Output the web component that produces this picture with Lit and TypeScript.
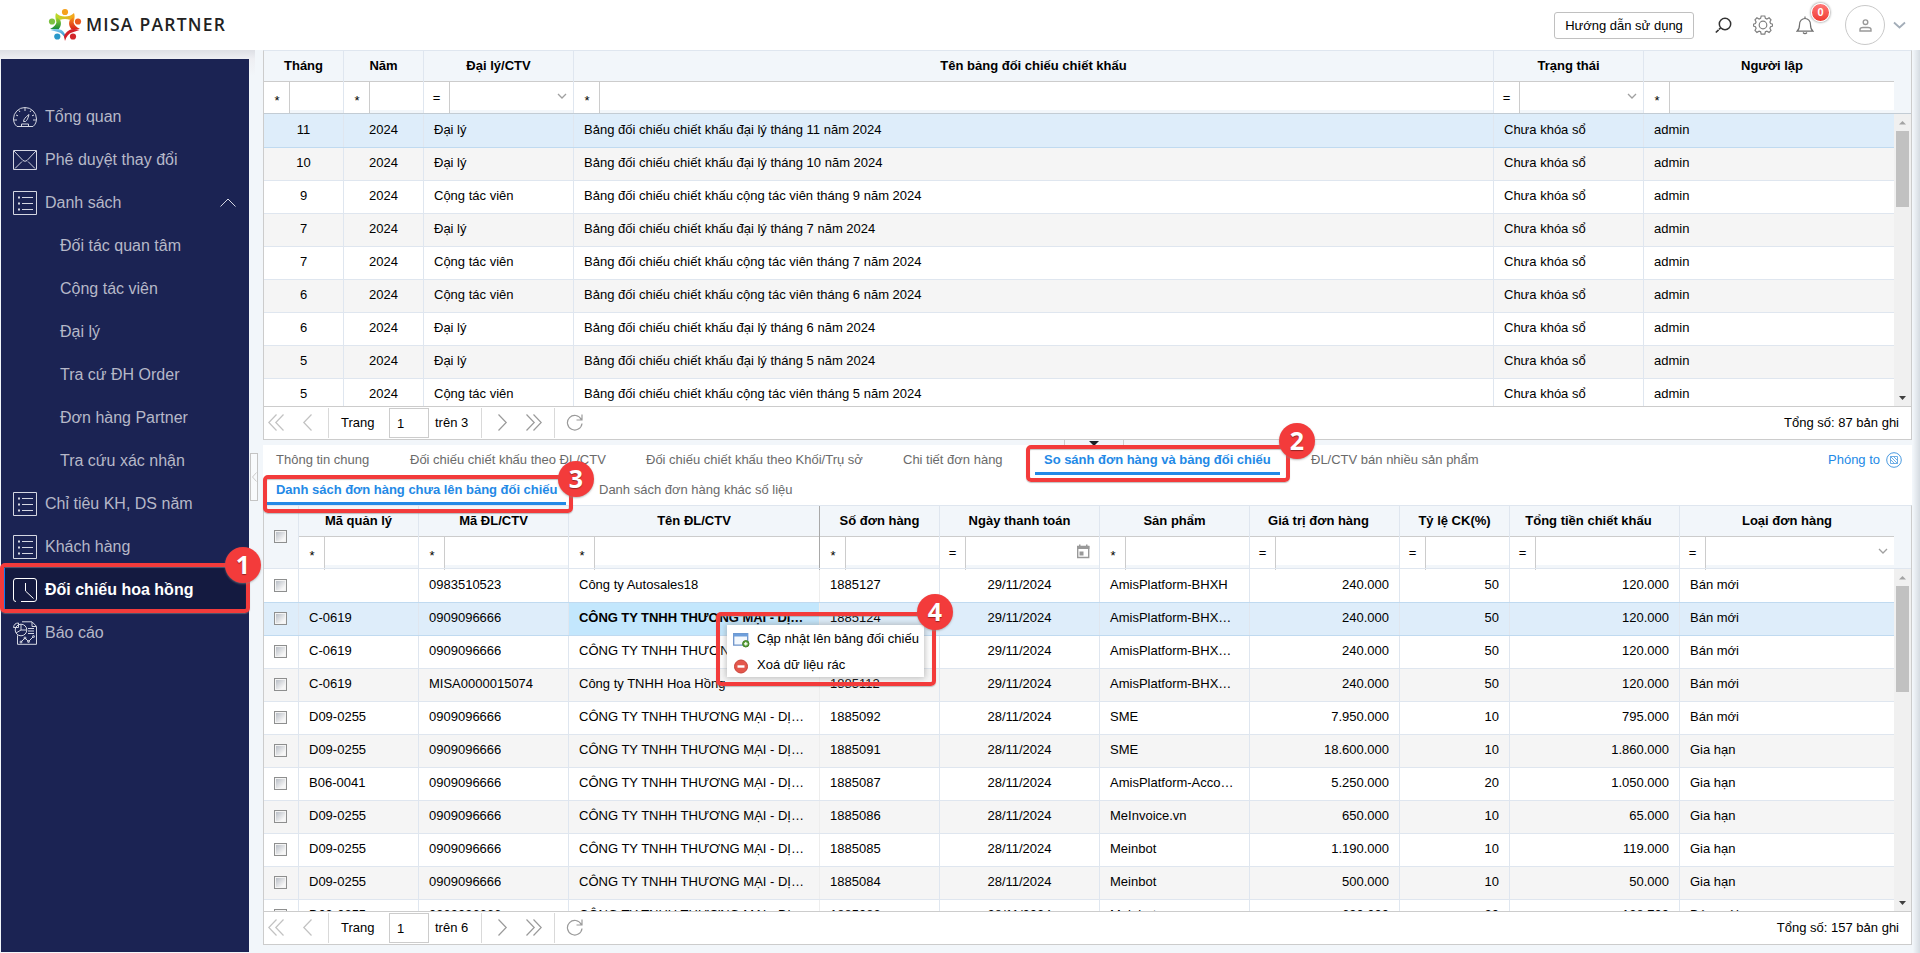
import { LitElement, html, svg, css, nothing } from "lit";
import { customElement } from "lit/decorators.js";
import { classMap } from "lit/directives/class-map.js";

type Col = { t: string; op: string; al?: string; icon?: string; shift?: string };

const GRID1: Col[] = [
  { t: "Tháng", op: "*", al: "c" },
  { t: "Năm", op: "*", al: "c" },
  { t: "Đại lý/CTV", op: "=", icon: "down" },
  { t: "Tên bảng đối chiếu chiết khấu", op: "*" },
  { t: "Trạng thái", op: "=", icon: "down" },
  { t: "Người lập", op: "*", shift: "fwd" },
];
const AG = "Đại lý", CTV = "Cộng tác viên";
const ROWS1 = ([[11, AG], [10, AG], [9, CTV], [7, AG], [7, CTV], [6, CTV], [6, AG], [5, AG], [5, CTV]] as [number, string][]).map(
  ([m, k]) => [String(m), "2024", k, `Bảng đối chiếu chiết khấu ${k === AG ? "đại lý" : "cộng tác viên"} tháng ${m} năm 2024`, "Chưa khóa sổ", "admin"]
);

const GRID2: Col[] = [
  { t: "Mã quản lý", op: "*" },
  { t: "Mã ĐL/CTV", op: "*" },
  { t: "Tên ĐL/CTV", op: "*", al: "lock" },
  { t: "Số đơn hàng", op: "*" },
  { t: "Ngày thanh toán", op: "=", al: "c", icon: "cal" },
  { t: "Sản phẩm", op: "*" },
  { t: "Giá trị đơn hàng", op: "=", al: "r", shift: "back" },
  { t: "Tỷ lệ CK(%)", op: "=", al: "r" },
  { t: "Tổng tiền chiết khấu", op: "=", al: "r", shift: "back" },
  { t: "Loại đơn hàng", op: "=", icon: "down" },
];
const CO = "CÔNG TY TNHH THƯƠNG MẠI - DỊ…";
const ROWS2 = [
  ["", "0983510523", "Công ty Autosales18", "1885127", "29/11/2024", "AmisPlatform-BHXH", "240.000", "50", "120.000", "Bán mới"],
  ["C-0619", "0909096666", CO, "1885124", "29/11/2024", "AmisPlatform-BHX…", "240.000", "50", "120.000", "Bán mới"],
  ["C-0619", "0909096666", CO, "1885119", "29/11/2024", "AmisPlatform-BHX…", "240.000", "50", "120.000", "Bán mới"],
  ["C-0619", "MISA0000015074", "Công ty TNHH Hoa Hồng", "1885112", "29/11/2024", "AmisPlatform-BHX…", "240.000", "50", "120.000", "Bán mới"],
  ["D09-0255", "0909096666", CO, "1885092", "28/11/2024", "SME", "7.950.000", "10", "795.000", "Bán mới"],
  ["D09-0255", "0909096666", CO, "1885091", "28/11/2024", "SME", "18.600.000", "10", "1.860.000", "Gia hạn"],
  ["B06-0041", "0909096666", CO, "1885087", "28/11/2024", "AmisPlatform-Acco…", "5.250.000", "20", "1.050.000", "Gia hạn"],
  ["D09-0255", "0909096666", CO, "1885086", "28/11/2024", "MeInvoice.vn", "650.000", "10", "65.000", "Gia hạn"],
  ["D09-0255", "0909096666", CO, "1885085", "28/11/2024", "Meinbot", "1.190.000", "10", "119.000", "Gia hạn"],
  ["D09-0255", "0909096666", CO, "1885084", "28/11/2024", "Meinbot", "500.000", "10", "50.000", "Gia hạn"],
  ["D09-0255", "0909096666", CO, "1885083", "28/11/2024", "Meinbot", "690.000", "20", "138.700", "Bán mới"],
];

const MENU = [
  { t: "Tổng quan", i: "gauge" },
  { t: "Phê duyệt thay đổi", i: "mail" },
  { t: "Danh sách", i: "list", open: true },
  { t: "Đối tác quan tâm" },
  { t: "Cộng tác viên" },
  { t: "Đại lý" },
  { t: "Tra cứ ĐH Order" },
  { t: "Đơn hàng Partner" },
  { t: "Tra cứu xác nhận" },
  { t: "Chỉ tiêu KH, DS năm", i: "list" },
  { t: "Khách hàng", i: "list" },
  { t: "Đối chiếu hoa hồng", i: "clock", on: true },
  { t: "Báo cáo", i: "report" },
];

const MENU_ICONS: Record<string, unknown> = {
  gauge: svg`<path d="M4 21.500C1.500 19.500.5 16.500.5 14a11.500 11.500 0 0 1 23 0c0 2.500-1 5.500-3.500 7.500z"/><path d="M8.500 21.500v-2.500h7v2.500M10.500 16.500c0-2 2-4.500 5.500-7-1 4-2 6-3.500 7zM12 3v3M6 5.500l1 1.500M18 5.500l-1 1.500M3 10l2 .8M21 10l-2 .8M1 15h3M20 15h3"/>`,
  mail: svg`<path d="M.5 2.500h23v19H.5zM1 3l9 9.500q2 1.600 4 0L23 3M2 20.500l7-7M22 20.500l-7-7"/>`,
  list: svg`<path d="M.5.5h23v23H.5zM9 6.500h11M9 12.500h11M9 18.500h11"/><path d="M5 6.500h2M5 12.500h2M5 18.500h2" stroke-width="2"/>`,
  clock: svg`<path d="M3 23.500A2.500 2.500 0 0 1 .5 21V3A2.500 2.500 0 0 1 3 .5h18A2.500 2.500 0 0 1 23.500 3v18a2.500 2.500 0 0 1-2.500 2.500H8M12.500 5v8l8 7.500"/>`,
  report: svg`<path d="M9 .8h10l4.500 4.500v18H4.500v-9M19 1v4.500h4M15 7.500h6M15 10h6M15 12.500h6"/><circle cx="8" cy="9" r="5.800"/><path d="M8 9V3.200M8 9h5.800M8 9l-5 3M.5 6.500Q1 2 5.500 2v4.500z"/><path d="M8 21l4-4 3.500 3.500 5-5"/><circle cx="8" cy="21" r="1"/><circle cx="12" cy="17" r="1"/><circle cx="15.500" cy="20.500" r="1"/><circle cx="20.500" cy="15.500" r="1"/>`,
};

const pageIcon = (d: string, w: number) => html`<svg class="pi" width=${w} height="17" viewBox="0 0 ${w} 17"><path d=${d} /></svg>`;
const arrow = (up: boolean) => html`<svg width="17" height="17" viewBox="0 0 17 17"><path d=${up ? "M5 10.500h7L8.500 7z" : "M5 7h7l-3.500 4z"} fill=${up ? "#a3a3a3" : "#404040"} /></svg>`;

@customElement("app-root")
export class AppRoot extends LitElement {
  static styles = css`
    :host { display: block; position: relative; width: 1920px; height: 953px; overflow: hidden; background: #f2f6fa; font: 13px/16px "Liberation Sans", Arial, sans-serif; color: #000; }
    * { box-sizing: border-box; }
    svg { display: block; flex: none; fill: none; }
    .top { height: 50px; background: #fff; display: flex; align-items: center; padding-left: 48px; }
    .brand { font: 600 17.500px/24px "Open Sans", sans-serif; letter-spacing: 1.250px; color: #222; margin: -2px 0 0 4px; white-space: nowrap; }
    .tools { margin-left: auto; display: flex; align-items: center; }
    .help { width: 140px; height: 27px; border: 1px solid #c0c0c0; border-radius: 3px; text-align: center; line-height: 25px; margin-right: 21px; }
    .gear { margin-left: 21px; margin-right: 1px; }
    .bellbox { position: relative; margin-left: 22px; }
    .count { position: absolute; left: 15px; top: -13px; width: 19px; height: 19px; border-radius: 50%; background: linear-gradient(#f77, #f03c32); border: 1px solid #fff; box-shadow: 0 0 2px 1px #bbb; color: #fff; font: bold 11px/17px "Liberation Sans", sans-serif; text-align: center; }
    .ava { width: 40px; height: 40px; border: 1px solid #c9c9c9; border-radius: 50%; display: grid; place-items: center; margin: 0 8px 0 31px; }
    .caret { margin-right: 14px; }
    .main { display: flex; height: 903px; }
    .left { width: 255px; flex: none; background: linear-gradient(#dddfe5, #eeeff3 9px, #f2f6fa 26px); padding: 9px 0 0 1px; position: relative; }
    .side { width: 248px; height: 893px; background: #1b2353; padding-top: 36px; }
    .item { height: 43px; display: flex; align-items: center; padding: 0 13px 0 12px; font-size: 16px; line-height: 20px; color: #b6b8c8; gap: 8px; white-space: nowrap; }
    .item span { flex: 1; }
    .item.sub { padding-left: 59px; }
    .item.on { background: #141a40; color: #fff; font-weight: bold; box-shadow: inset 4px 0 #0a7cf5; }
    .item svg { stroke: #d5d7e2; }
    .item.on svg { stroke: #fff; }
    .grip { position: absolute; left: 250px; top: 403px; width: 8px; height: 48px; border: 1px solid #c4c4c4; background: #f8fafc; display: grid; place-items: center; z-index: 1; }
    .content { width: 1649px; margin-left: 8px; flex: none; display: flex; flex-direction: column; }
    .edge { flex: 1; background: linear-gradient(90deg, #f2f6fa 10%, #d5dbe1); }
    .grid { border: 1px solid #ccc; border-top-color: #dfe6ef; display: flex; flex-direction: column; overflow: hidden; background: #fff; }
    .g1 { height: 390px; }
    .g2 { height: 440px; }
    .head { height: 62px; background: #f2f6fa; display: flex; flex: none; }
    .cols { display: grid; width: 1630px; flex: none; }
    .g1 .cols { grid-template-columns: 80px 80px 150px 920px 150px 250px; }
    .g2 .cols { grid-template-columns: 35px 120px 150px 251px 120px 160px 150px 150px 110px 170px 214px; }
    .h { border-right: 1px solid #dfe6ef; display: flex; flex-direction: column; min-width: 0; }
    .h:last-child, .cell:last-child { border-right: 0; }
    .h.lock { border-right-color: #a9a9a9; }
    .title { height: 31px; border-bottom: 1px solid #ccc; text-align: center; font-weight: bold; line-height: 29px; white-space: nowrap; }
    .title.back { padding-right: 12px; }
    .title.fwd { padding-left: 6px; }
    .filter { flex: 1; display: flex; }
    .op { width: 26px; background: #fff; border-right: 1px solid #ccc; text-align: center; line-height: 31px; }
    .op.star { padding: 4px 0 0 1px; line-height: 29px; }
    .inp { flex: 1; height: 28px; background: #fff; display: flex; justify-content: flex-end; align-items: center; padding-right: 6px; }
    .ck { display: grid; place-items: center; }
    .box { width: 13px; height: 13px; border: 1px solid #8e8f8f; background: linear-gradient(135deg, #b9bec6, #f6f6f6 80%) content-box, #f4f4f4; padding: 1px; margin-right: 1px; }
    .h .box { margin-bottom: 3px; }
    .bodywrap { flex: 1; display: flex; min-height: 0; border-top: 1px solid #dfe6ef; border-bottom: 1px solid #ccc; overflow: hidden; }
    .g1 .bodywrap { border-top-color: #c3ccd4; }
    .rows { width: 1630px; flex: none; overflow: hidden; }
    .cols.row { height: 33px; border-bottom: 1px solid #dfe6ef; }
    .g1 .row:first-child, .g2 .row:first-child { height: 34px; padding-top: 1px; }
    .row.alt { background: #f5f5f5; }
    .row.sel { background: #deedfa; border-bottom-color: #c0daf0; box-shadow: 0 -1px #c0daf0; }
    .cell { border-right: 1px solid #dfe6ef; padding: 0 10px; line-height: 29px; white-space: nowrap; overflow: hidden; }
    .cell.c { text-align: center; }
    .cell.r { text-align: right; }
    .cell.ck { padding: 0 0 1px; overflow: visible; }
    .cell.lock { border-right-color: #ededed; }
    .cell.focus { background: #c3e7fd; font-weight: bold; letter-spacing: -0.060px; }
    .bar { width: 17px; background: #f0f0f0; display: flex; flex-direction: column; }
    .thumb { width: 13px; margin: 0 2px; background: #c1c1c1; }
    .t1 { height: 76px; }
    .t2 { height: 106px; }
    .bar svg:last-child { margin-top: auto; }
    .pager { height: 32px; flex: none; display: flex; align-items: center; padding: 0 12px 1px 4px; background: #fff; }
    .pi { stroke: #9a9a9a; stroke-width: 1.200; }
    .dim { opacity: 0.600; }
    .prev { margin: 0 15px 0 17px; }
    .next { margin: 0 17px 0 15px; }
    .sep { width: 1px; height: 30px; background: #d9d9d9; }
    .sep.wide { margin: 0 11px 0 12px; }
    .word { width: 60px; padding-left: 12px; }
    .of { width: 52px; padding-left: 6px; }
    .pno { width: 40px; height: 30px; border: 1px solid #ccc; padding-left: 7px; line-height: 29px; }
    .total { margin-left: auto; }
    .split { height: 5px; display: flex; justify-content: center; }
    .handle { width: 60px; border: 1px solid #ccc; border-width: 0 1px; margin-left: 12px; display: flex; justify-content: center; }
    .tabs { background: #fff; display: grid; height: 30px; color: #6a6a6a; }
    .ta { grid-template-columns: 134px 236px 257px 141px 267px 526px 1fr; padding-left: 4px; }
    .tb { grid-template-columns: 323px 1fr; padding-left: 4px; }
    .tab { padding: 7px 9px 0; white-space: nowrap; height: 30px; justify-self: start; }
    .tab.on { color: #2389e6; font-weight: bold; box-shadow: inset 0 -3px #2389e6; letter-spacing: -0.020px; }
    .zoom { display: flex; gap: 6px; align-items: center; color: #2389e6; white-space: nowrap; height: 30px; }
    .red { position: absolute; border: 4px solid #f33b3b; border-radius: 5px; box-shadow: 0 1px 1px #8888, inset 0 1px 1px #8888; z-index: 3; }
    .num { position: absolute; z-index: 4; width: 36px; height: 36px; border-radius: 50%; background: #f33b3b; color: #fff; font: bold 25px/35px "Open Sans", sans-serif; text-align: center; box-shadow: 0 1px 2px #8889; text-shadow: 0 1px 1px #0006; }
    .b1 { left: 0; top: 563px; width: 250px; height: 50px; }
    .b2 { left: 1026px; top: 445px; width: 264px; height: 37px; }
    .b3 { left: 263px; top: 475px; width: 310px; height: 38px; }
    .b4 { left: 716px; top: 612px; width: 220px; height: 74px; }
    .n1 { left: 225px; top: 547px; }
    .n2 { left: 1279px; top: 423px; }
    .n3 { left: 558px; top: 461px; }
    .n4 { left: 917px; top: 594px; }
    .ctx { position: absolute; z-index: 2; left: 727px; top: 625px; width: 197px; height: 52px; background: #fff; box-shadow: 0 0 6px 1px #8888; padding: 1px 6px 0; }
    .ctx div { display: flex; align-items: center; gap: 7px; height: 26px; white-space: nowrap; }
  `;

  header() {
    return html`<div class="top">
      <svg width="34" height="34" viewBox="0 0 33 34">
        <defs>
          <linearGradient id="a"><stop stop-color="#b6dc2a" /><stop offset="1" stop-color="#f9a21a" /></linearGradient>
          <linearGradient id="b" x2="0" y2="1"><stop stop-color="#a4d531" /><stop offset="1" stop-color="#128a3c" /></linearGradient>
          <linearGradient id="c" x2="0" y2="1"><stop stop-color="#f8901c" /><stop offset="1" stop-color="#d8201c" /></linearGradient>
          <linearGradient id="d" x2="0" y2="1"><stop stop-color="#7cc9ee" /><stop offset="1" stop-color="#1978b8" /></linearGradient>
        </defs>
        <circle cx="16.500" cy="4" r="3.100" fill="#f6a11c" /><circle cx="3.500" cy="13.500" r="3.100" fill="#7cc142" /><circle cx="29.500" cy="13.500" r="3.100" fill="#e9591f" /><circle cx="8.800" cy="28.500" r="3.100" fill="#2a98c9" /><circle cx="24.500" cy="28.500" r="3.100" fill="#d3252a" />
        <path d="M7.500 5q3.500 3.500 9 3.500t9-3.500q1.500 4-.5 9l-3-2q-5.500-2-11 0l-3 2Q6 9 7.500 5z" fill="url(#a)" />
        <path d="M8 9l4 3.500q1.500 5-2 9L1.500 21q6-3 6.500-7z" fill="url(#b)" />
        <path d="M25 9l-4 3.500q-1.500 5 2 9l8.500-.5q-6-3-6.500-7z" fill="url(#c)" />
        <path d="M2 22q6-2 11 0 4 2.500 4 9-3-6-7.500-7z" fill="url(#d)" />
        <path d="M31 22q-6-2-10 0-5 3-5.500 6.500l1 4.500q2-7 7-8.500z" fill="#d4202a" />
      </svg>
      <div class="brand">MISA PARTNER</div>
      <div class="tools">
        <div class="help">Hướng dẫn sử dụng</div>
        <svg width="17" height="17" viewBox="0 0 17 17" stroke="#333"><circle cx="10" cy="7" r="5.700" stroke-width="1.500" /><path d="M5.500 11L.8 15.500" stroke-width="1.600" stroke-dasharray="2 .6 9" /></svg>
        <svg class="gear" width="20" height="20" viewBox="0 0 20 20" stroke="#808080" stroke-width="1.200"><circle cx="10" cy="10" r="3.800" /><path d="M8.200 1h3.600l.6 2.400 1.500.6 2.200-1.200 1.900 2-1.100 2.200.7 1.500 2 .7v1.800l-2 .7-.7 1.500 1.100 2.200-1.900 2-2.200-1.200-1.500.6-.6 2.400H8.200l-.6-2.400-1.500-.6-2.200 1.200-1.900-2 1.100-2.200-.7-1.500-2-.7V9.200l2-.7.7-1.500L2 4.800l1.900-2L6.100 4l1.500-.6z" /></svg>
        <div class="bellbox">
          <svg width="18" height="19" viewBox="0 0 18 19" stroke="#707070" stroke-width="1.200"><path d="M1 15.200q2.500-2 2.500-6.500C3.500 5 6 2.500 9 2.500S14.500 5 14.500 8.700q0 4.500 2.500 6.500z" /><path d="M9 .5v2M7 16.500q2 2.200 4 0" /></svg>
          <div class="count">0</div>
        </div>
        <div class="ava"><svg width="13" height="13" viewBox="0 0 13 13" stroke="#999" stroke-width="1.400"><circle cx="6.500" cy="3.200" r="2.300" /><path d="M1 12v-1.500q0-2 3-2h5q3 0 3 2V12z" /></svg></div>
        <svg class="caret" width="13" height="9" viewBox="0 0 13 9" stroke="#a3adb8" stroke-width="1.800"><path d="M1 1.500l5.500 5 5.500-5" /></svg>
      </div>
    </div>`;
  }

  head(cols: Col[], check: boolean) {
    return html`<div class="head"><div class="cols">
      ${check ? html`<div class="h ck"><div class="box"></div></div>` : nothing}
      ${cols.map((c) => html`<div class=${classMap({ h: true, lock: c.al === "lock" })}>
        <div class=${classMap({ title: true, back: c.shift === "back", fwd: c.shift === "fwd" })}>${c.t}</div>
        <div class="filter"><div class=${classMap({ op: true, star: c.op === "*" })}>${c.op}</div><div class="inp">
          ${c.icon === "down" ? html`<svg width="10" height="7" viewBox="0 0 10 7" stroke="#a0a0a0" stroke-width="1.300"><path d="M1 1l4 4 4-4" /></svg>` : nothing}
          ${c.icon === "cal" ? html`<svg width="18" height="15" viewBox="0 0 18 15"><path d="M2.700 2.500h11v11h-11z" stroke="#999" stroke-width="1.400" /><path d="M2 2h12.400v3H2zM4 .5h1.500V3H4zM11 .5h1.500V3H11zM4.500 7.500h4v4h-4z" fill="#999" /></svg>` : nothing}
        </div></div>
      </div>`)}
    </div></div>`;
  }

  body(cols: Col[], rows: string[][], check: boolean, sel: number) {
    return html`<div class="bodywrap"><div class="rows">
      ${rows.map((r, i) => html`<div class=${classMap({ cols: true, row: true, sel: i === sel, alt: i % 2 === 1 && i !== sel })}>
        ${check ? html`<div class="cell ck"><div class="box"></div></div>` : nothing}
        ${r.map((v, j) => html`<div class=${classMap({ cell: true, c: cols[j].al === "c", r: cols[j].al === "r", lock: cols[j].al === "lock", focus: check && i === sel && j === 2 })}>${v}</div>`)}
      </div>`)}
    </div>
    <div class="bar">${arrow(true)}<div class=${check ? "thumb t2" : "thumb t1"}></div>${arrow(false)}</div></div>`;
  }

  pager(pages: number, total: number) {
    return html`<div class="pager">
      <span class="dim">${pageIcon("M8.500 .5L.8 8.500l7.700 8M15.500 .5L7.800 8.500l7.700 8", 17)}</span>
      <span class="dim prev">${pageIcon("M9.500 .5L1.800 8.500l7.700 8", 11)}</span>
      <i class="sep"></i><span class="word">Trang</span><span class="pno">1</span><span class="of">trên ${pages}</span><i class="sep"></i>
      <span class="next">${pageIcon("M1.500 .5l7.700 8-7.700 8", 11)}</span>
      ${pageIcon("M1.500 .5l7.700 8-7.700 8M8.500 .5l7.700 8-7.700 8", 17)}
      <i class="sep wide"></i>
      ${pageIcon("M15.300 5.500A7.300 7.300 0 1 0 16 9.500M16 .5v5.500h-5.500", 17)}
      <span class="total">Tổng số: ${total} bản ghi</span>
    </div>`;
  }

  render() {
    return html`${this.header()}
      <div class="main">
        <div class="left">
          <div class="side">
            ${MENU.map((m) => html`<div class=${classMap({ item: true, sub: !m.i, on: !!m.on })}>
              ${m.i ? html`<svg width="24" height="24" viewBox="0 0 24 24">${MENU_ICONS[m.i]}</svg>` : nothing}
              <span>${m.t}</span>
              ${m.open ? html`<svg width="16" height="9" viewBox="0 0 16 9"><path d="M.5 8.500L8 1l7.500 7.500" /></svg>` : nothing}
            </div>`)}
          </div>
          <div class="grip"><svg width="6" height="10" viewBox="0 0 6 10" stroke="#ccc"><path d="M5.500 .5L1.500 5l4 4.500" /></svg></div>
        </div>
        <div class="content">
          <div class="grid g1">${this.head(GRID1, false)}${this.body(GRID1, ROWS1, false, 0)}${this.pager(3, 87)}</div>
          <div class="split"><div class="handle"><svg width="10" height="5" viewBox="0 0 10 5"><path d="M0 1h10L6 5H4z" fill="#1b2126" /></svg></div></div>
          <div class="tabs ta">
            <div class="tab">Thông tin chung</div><div class="tab">Đối chiếu chiết khấu theo ĐL/CTV</div><div class="tab">Đối chiếu chiết khấu theo Khối/Trụ sở</div><div class="tab">Chi tiết đơn hàng</div><div class="tab on">So sánh đơn hàng và bảng đối chiếu</div><div class="tab">ĐL/CTV bán nhiều sản phẩm</div>
            <div class="zoom">Phóng to <svg width="16" height="16" viewBox="0 0 16 16" stroke="#4b9be0"><circle cx="8" cy="8" r="7.300" /><path d="M4.500 4.500h7v7h-7zM4.500 4.500l7 7M7.500 4.500l4 4M4.500 7.500l4 4" stroke-width=".8" /></svg></div>
          </div>
          <div class="tabs tb"><div class="tab on">Danh sách đơn hàng chưa lên bảng đối chiếu</div><div class="tab">Danh sách đơn hàng khác số liệu</div></div>
          <div class="grid g2">${this.head(GRID2, true)}${this.body(GRID2, ROWS2, true, 1)}${this.pager(6, 157)}</div>
        </div>
        <div class="edge"></div>
      </div>
      <div class="ctx">
        <div><svg width="17" height="17" viewBox="0 0 17 17"><path d="M.7 2.700h14v11.500h-14z" fill="#f3f8fd" stroke="#6d93c9" stroke-width="1.300" /><path d="M.5 2.500h14.500v3H.5z" fill="#6d9edb" /><circle cx="12.800" cy="12.800" r="3.200" fill="#5da53b" stroke="#3e7d25" /><path d="M12.800 11v3.600M11 12.800h3.600" stroke="#fff" stroke-width="1.200" /></svg>Cập nhật lên bảng đối chiếu</div>
        <div><svg width="17" height="17" viewBox="0 0 17 17"><circle cx="8" cy="9.500" r="6.500" fill="#e4574c" stroke="#c94036" /><path d="M4.500 9.500h7" stroke="#fff" stroke-width="2.400" /></svg>Xoá dữ liệu rác</div>
      </div>
      <div class="red b1"></div><div class="red b2"></div><div class="red b3"></div><div class="red b4"></div>
      <div class="num n1">1</div><div class="num n2">2</div><div class="num n3">3</div><div class="num n4">4</div>`;
  }
}
